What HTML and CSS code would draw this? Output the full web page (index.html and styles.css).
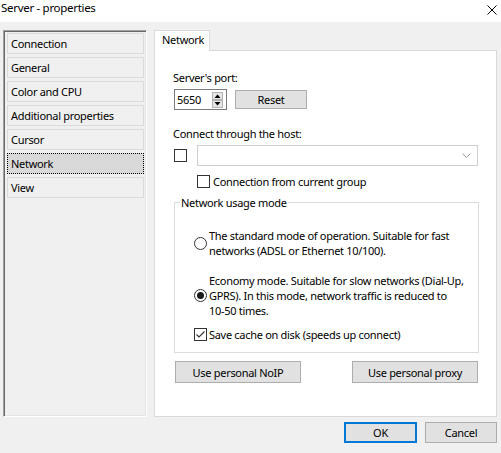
FILE: index.html
```html
<!DOCTYPE html>
<html>
<head>
<meta charset="utf-8">
<title>Server - properties</title>
<link rel="stylesheet" href="styles.css">
</head>
<body>
<div class="window">
  <div class="titlebar">
    <span class="title">Server - properties</span>
    <svg class="close" width="10" height="10" viewBox="0 0 10 10"><path d="M0.5 0.5L9.5 9.5M9.5 0.5L0.5 9.5" stroke="#000" stroke-width="1" fill="none"/></svg>
  </div>
  <div class="main">
    <div class="list">
      <div class="item">Connection</div>
      <div class="item">General</div>
      <div class="item">Color and CPU</div>
      <div class="item">Additional properties</div>
      <div class="item">Cursor</div>
      <div class="item selected">Network</div>
      <div class="item">View</div>
    </div>
    <div class="tabs">
      <div class="tabbar"><div class="tab">Network</div></div>
      <div class="panel">
        <div class="label">Server's port:</div>
        <div class="port-row">
          <div class="spin">
            <span class="spin-value">5650</span>
            <svg class="spin-btns" width="11" height="16" viewBox="0 0 11 16">
              <rect x="0.5" y="0.5" width="10" height="7" fill="#e6e6e6" stroke="#b4b4b4"/>
              <rect x="0.5" y="8.5" width="10" height="7" fill="#e6e6e6" stroke="#b4b4b4"/>
              <path d="M2.5 6L5.5 2.5L8.5 6Z" fill="#000"/>
              <path d="M2.5 10L5.5 13.5L8.5 10Z" fill="#000"/>
            </svg>
          </div>
          <button class="btn reset">Reset</button>
        </div>
        <div class="label host-label">Connect through the host:</div>
        <div class="host-row">
          <span class="check"></span>
          <div class="combo">
            <svg class="chevron" width="9" height="5" viewBox="0 0 9 5"><path d="M0.5 0.5L4.5 4.5L8.5 0.5" stroke="#9a9a9a" stroke-width="1" fill="none"/></svg>
          </div>
        </div>
        <div class="check-row group-check"><span class="check"></span><span class="check-text">Connection from current group</span></div>
        <fieldset class="group">
          <legend>Network usage mode</legend>
          <div class="group-body">
            <div class="radio-row"><span class="radio"></span><span class="radio-text">The standard mode of operation. Suitable for fast<br>networks (ADSL or Ethernet 10/100).</span></div>
            <div class="radio-row second"><span class="radio checked"></span><span class="radio-text">Economy mode. Suitable for slow networks (Dial-Up,<br>GPRS). In this mode, network traffic is reduced to<br>10-50 times.</span></div>
            <div class="check-row cache-check"><span class="check checked"><svg width="11" height="11" viewBox="0 0 11 11"><path d="M1.5 5.5L4 8L9.5 2.5" stroke="#333" stroke-width="1.1" fill="none"/></svg></span><span class="cache-text">Save cache on disk (speeds up connect)</span></div>
          </div>
        </fieldset>
        <div class="btn-row">
          <button class="btn wide">Use personal NoIP</button>
          <button class="btn wide">Use personal proxy</button>
        </div>
      </div>
    </div>
  </div>
  <div class="footer">
    <button class="btn ok">OK</button>
    <button class="btn cancel">Cancel</button>
  </div>
</div>
</body>
</html>
```

FILE: styles.css
```css
* { box-sizing: border-box; }
html, body { margin: 0; padding: 0; }
body {
  background: #f0f0f0;
  font-family: "Noto Sans", "Open Sans", sans-serif;
  font-size: 11px;
  letter-spacing: -0.3px;
  line-height: 15px;
  color: #000;
  width: 501px;
  height: 453px;
  overflow: hidden;
}
.window { width: 501px; height: 453px; }
.titlebar {
  height: 22px;
  background: #fff;
  display: flex;
  justify-content: space-between;
  align-items: flex-start;
  padding: 0 4px 0 1px;
}
.title { font-size: 11.5px; line-height: 16px; }
.close { margin-top: 5px; }
.main {
  display: flex;
  gap: 7px;
  padding: 8px 0 0 3px;
}
.list {
  width: 144px;
  height: 387px;
  border-top: 1px solid #a0a0a0;
  border-left: 1px solid #a0a0a0;
  border-right: 1px solid #fff;
  border-bottom: 1px solid #fff;
  box-shadow: inset 1px 1px 0 #696969, inset -1px -1px 0 #e3e3e3;
  padding: 2px 2px 0 3px;
  display: flex;
  flex-direction: column;
  gap: 3px;
}
.item {
  height: 21px;
  border: 1px solid #dadada;
  padding: 2px 0 0 3px;
  line-height: 15px;
  white-space: nowrap;
}
.item.selected {
  background: #d9d9d9;
  border: 1px dotted #000;
}
.tabs { width: 343px; }
.tabbar { height: 20px; }
.tab {
  position: relative;
  z-index: 1;
  width: 56px;
  height: 21px;
  background: #fff;
  border: 1px solid #d9d9d9;
  border-bottom: none;
  padding: 1px 0 0 7px;
}
.panel {
  height: 367px;
  background: #fff;
  border: 1px solid #d9d9d9;
  padding: 19px 18px 0 18px;
}
.label { line-height: 15px; }
.port-row {
  margin-top: 4px;
  height: 21px;
  display: flex;
  align-items: center;
}
.spin {
  margin-left: 1px;
  width: 53px;
  height: 21px;
  border: 1px solid #7a7a7a;
  display: flex;
  align-items: center;
  justify-content: space-between;
  padding: 0 3px 0 2px;
}
.btn {
  font-family: inherit;
  font-size: inherit;
  letter-spacing: inherit;
  line-height: 15px;
  color: #000;
  background: #e1e1e1;
  border: 1px solid #adadad;
  padding: 0;
  margin: 0;
}
.reset { margin-left: 8px; width: 72px; height: 19px; }
.host-label { margin-top: 16px; }
.host-row {
  margin-top: 4px;
  height: 21px;
  display: flex;
  align-items: center;
}
.check {
  display: inline-flex;
  align-items: center;
  justify-content: center;
  width: 13px;
  height: 13px;
  border: 1px solid #333;
  background: #fff;
  flex: none;
}
.host-row .check { margin-left: 1px; }
.combo {
  margin-left: 10px;
  width: 281px;
  height: 21px;
  border: 1px solid #cfcfcf;
  display: flex;
  align-items: center;
  justify-content: flex-end;
  padding-right: 6px;
}
.check-row {
  display: flex;
  align-items: center;
  height: 15px;
}
.group-check { margin-top: 8px; margin-left: 24px; }
.check-text { margin-left: 3px; white-space: nowrap; }
.group {
  margin: 6px 0 0 1px;
  padding: 0;
  width: 305px;
  border: 1px solid #dcdcdc;
  min-width: 0;
}
.group legend {
  margin-left: 5px;
  padding: 0 1px;
  line-height: 15px;
}
.group-body {
  padding: 18px 0 10px 19px;
}
.radio-row {
  display: flex;
  align-items: center;
}
.radio-row.second { margin-top: 15px; }
.radio {
  width: 13px;
  height: 13px;
  border: 1px solid #333;
  border-radius: 50%;
  background: #fff;
  flex: none;
  display: flex;
  align-items: center;
  justify-content: center;
}
.radio.checked::after {
  content: "";
  width: 7px;
  height: 7px;
  border-radius: 50%;
  background: #1a1a1a;
}
.radio-text { margin-left: 2px; white-space: nowrap; }
.cache-check { margin-top: 9px; }
.cache-text { margin-left: 2px; white-space: nowrap; }
.btn-row {
  margin-top: 8px;
  display: flex;
  justify-content: space-between;
  padding-left: 2px;
}
.wide { width: 126px; height: 22px; }
.footer {
  margin-top: 5px;
  display: flex;
  justify-content: flex-end;
  gap: 8px;
  padding-right: 4px;
}
.ok { width: 73px; height: 21px; border: 2px solid #0078d7; }
.cancel { width: 72px; height: 21px; }
```
